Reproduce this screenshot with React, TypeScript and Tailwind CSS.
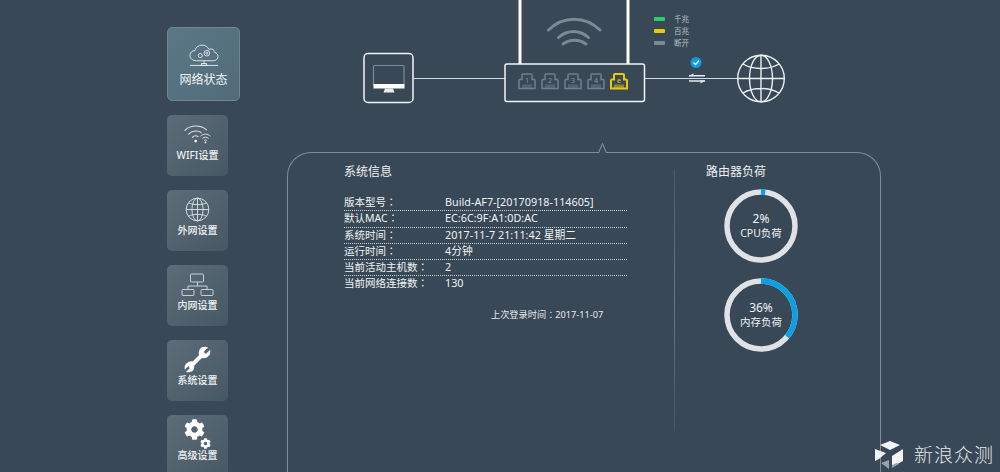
import { FaCog } from "react-icons/fa";

const FONT = "font-['Noto_Sans','Noto_Sans_CJK_SC',sans-serif]";

const INFO = [
  { label: "版本型号", value: "Build-AF7-[20170918-114605]" },
  { label: "默认MAC", value: "EC:6C:9F:A1:0D:AC" },
  { label: "系统时间", value: "2017-11-7 21:11:42 星期二" },
  { label: "运行时间", value: "4分钟" },
  { label: "当前活动主机数", value: "2" },
  { label: "当前网络连接数", value: "130" },
];

const LEGEND = [
  { label: "千兆", bar: "bg-[#2ecc68]" },
  { label: "百兆", bar: "bg-[#e6c907]" },
  { label: "断开", bar: "bg-[#7d8a94]" },
];

function CloudIcon() {
  return (
    <svg width="30" height="25" viewBox="0 0 32 26" fill="none" stroke="#e4e9ec" strokeWidth="1">
      <path d="M8 17.5C3.5 17.5 1 15 1 11.8 1 8.800 3.300 6.800 6.200 6.800 7.200 3 10.500.8 14 .8c3.300 0 6 1.800 7.200 4.700 1-.5 1.800-.6 2.800-.5 2.600.3 3 2.200 3.100 3.500 2.400.6 3.900 2.500 3.900 4.400 0 2.700-2.300 4.600-5 4.600Z" />
      <circle cx="12" cy="12" r="2.200" />
      <circle cx="19" cy="9.500" r="3" />
      <circle cx="19" cy="9.500" r="1" />
      <path d="M16 17.500v3M1 22.500h30M12 22.500h8" />
      <rect x="13.500" y="20.500" width="5" height="2" />
    </svg>
  );
}

function WifiIcon() {
  return (
    <svg width="28" height="19" viewBox="0 0 30 20" fill="none" stroke="#dfe4e8" strokeLinecap="round">
      <path d="M1 5.500C7 -0.500 18 -0.500 24 5" strokeWidth="1.200" />
      <path d="M5 9.500C9 5.500 15.500 5.500 18.500 8" strokeWidth="1.200" />
      <path d="M9 13c2-1.800 4.500-1.800 6-.8" strokeWidth="1.200" />
      <circle cx="12.500" cy="17" r="1.500" fill="#f1f3f5" stroke="none" />
      <path d="M18 11.500c3-2.600 7-2.600 10 0M20 14c2-1.600 4-1.600 6 0M21.800 16.300c1-.8 1.500-.8 2.400 0" strokeWidth="1" />
      <circle cx="23" cy="18.500" r="1" fill="#f1f3f5" stroke="none" />
    </svg>
  );
}

function SmallGlobeIcon() {
  return (
    <svg width="25" height="25" viewBox="0 0 26 26" fill="none" stroke="#d9dfe3" strokeWidth="1">
      <circle cx="13" cy="13" r="11.800" />
      <ellipse cx="13" cy="13" rx="5.800" ry="11.800" />
      <path d="M13 1.200v23.600M1.200 13h23.600M3.500 6c5 2.600 14 2.600 19 0M3.500 20c5-2.600 14-2.600 19 0" />
    </svg>
  );
}

function TreeIcon() {
  return (
    <svg width="33" height="23" viewBox="0 0 33 23" fill="none" stroke="#c9d0d5" strokeWidth="1">
      <rect x="9.500" y="1" width="13" height="8" rx="1" />
      <path d="M16.500 9v4M7 17v-4h19v4" />
      <rect x="1" y="16.500" width="12" height="6" rx="1" />
      <rect x="20" y="16.500" width="12" height="6" rx="1" />
    </svg>
  );
}

function WrenchIcon() {
  return (
    <svg width="27" height="27" viewBox="0 0 28 28" fill="#fff">
      <path d="M18 1.500C20.500.5 23.500.7 25 1.500L20.500 6l2 2.200L27 4c.8 2.200.3 5-2 7-2 1.800-4.500 2-6.500 1.500l-8 8c.5 2.500-.5 5-2.500 6-2 1-4.500 1-6 .5l4-4-1.500-2.200-3.700 3.700C.2 22 1 19 3 17.500c2-1.500 4-2 6-1.500l6.500-6.500C15 6.500 15.500 3 18 1.500Z" />
    </svg>
  );
}

function GearsIcon() {
  return (
    <div className="relative h-[31px] w-[27px]">
      <FaCog className="absolute left-0 top-0 text-[21px] text-white" />
      <FaCog className="absolute bottom-[1px] right-0 text-[11px] text-white" />
    </div>
  );
}

function MenuItem({ label, icon, active }: { label: string; icon: React.ReactNode; active?: boolean }) {
  if (active) {
    return (
      <div className="flex h-[74px] w-[73px] shrink-0 flex-col items-center rounded-[5px] border border-[#71878f] bg-gradient-to-br from-[#5b7785] to-[#516b7b] pt-[16px]">
        {icon}
        <span className="mt-[3px] text-[12px] leading-[16px] text-[#f2f5f6]">{label}</span>
      </div>
    );
  }
  return (
    <div className="flex h-[61px] w-[61px] shrink-0 flex-col items-center rounded-[5px] bg-gradient-to-br from-[#5c6d79] to-[#56677380] pt-[6px]">
      <div className="flex h-[26px] items-center">{icon}</div>
      <span className="mt-px whitespace-nowrap text-[10px] font-medium leading-[14px] text-[#eef1f3]">{label}</span>
    </div>
  );
}

function Port({ x, active, n }: { x: number; active?: boolean; n: string }) {
  const color = active ? "#e9cb0a" : "#6f7f8d";
  return (
    <g transform={`translate(${x} 73)`} fill="none" stroke={color} strokeWidth={active ? 2 : 1.500}>
      <path d="M1 15.500V7.500a1 1 0 0 1 1-1H4V2a1 1 0 0 1 1-1h8a1 1 0 0 1 1 1v4.500h2a1 1 0 0 1 1 1v8Z" />
      <path d="M5 15v-3.500M7 15v-3.500M9 15v-3.500M11 15v-3.500M13 15v-3.500" strokeWidth="1" />
      <text x="9" y="10" textAnchor="middle" fontSize="7" fill={active ? color : "#8997a3"} stroke="none" fontFamily="Noto Sans">
        {n}
      </text>
    </g>
  );
}

function Topology() {
  return (
    <svg width="713" height="152" viewBox="287 0 713 152" fill="none" className="block">
      {/* monitor */}
      <rect x="364" y="53.500" width="49" height="49" rx="4" stroke="#f2f4f5" strokeWidth="1.500" />
      <rect x="373.500" y="65.500" width="30.500" height="20" rx="1" stroke="#7d8a94" strokeWidth="1.200" />
      <rect x="373.500" y="84" width="31" height="4.500" fill="#fff" />
      <path d="M385 88.500h8l1.500 4h-11Z" fill="#e9ecee" />
      {/* links */}
      <path d="M413 78.500h92M645 78.500h92" stroke="#d5dade" strokeWidth="1" />
      {/* router */}
      <path d="M520 0v64M628 0v64" stroke="#fff" strokeWidth="3" />
      <rect x="505" y="64" width="139.500" height="37.500" rx="2" stroke="#f2f4f5" strokeWidth="1.500" fill="#384856" />
      <path d="M548.500 30C563 15.500 585 15.500 600 30M558.500 37.500c9-8 21-8 30 0M563 44c7-5 16-5 23 0" stroke="#7d8a94" strokeWidth="3" strokeLinecap="round" />
      <Port x={518} n="1" />
      <Port x={541} n="2" />
      <Port x={564} n="3" />
      <Port x={587} n="4" />
      <Port x={610} n="e" active />
      {/* status + arrows */}
      <circle cx="696" cy="62.500" r="5.500" fill="#0d9be2" />
      <path d="M693.500 62.500l2 2 3.500-3.800" stroke="#fff" strokeWidth="1.300" />
      <path d="M689 75.700h16M689 81h16" stroke="#e6e9eb" strokeWidth="1.500" />
      <path d="M688.500 76.200l5-3v3ZM705.500 80.500l-5 3v-3Z" fill="#e6e9eb" />
      {/* globe */}
      <g stroke="#eceff1" strokeWidth="1.400">
        <circle cx="761" cy="78.500" r="23.300" />
        <ellipse cx="761" cy="78.500" rx="11.500" ry="23.300" />
        <path d="M761 55.200v46.600M737.700 78.500h46.600M743 64c10 6 26 6 36 0M743 93c10-6 26-6 36 0" />
      </g>
    </svg>
  );
}

function Donut({ percent, value, label }: { percent: number; value: string; label: string }) {
  const r = 34;
  const c = 2 * Math.PI * r;
  return (
    <div className="relative h-[74px] w-[74px]">
      <svg width="74" height="74" viewBox="0 0 74 74" fill="none">
        <circle cx="37" cy="37" r={r} stroke="#dfe3e7" strokeWidth="5.500" />
        <circle
          cx="37"
          cy="37"
          r={r}
          stroke="#0b9fe3"
          strokeWidth="5.500"
          strokeDasharray={`${(percent / 100) * c} ${c}`}
          transform="rotate(-90 37 37)"
        />
      </svg>
      <div className="absolute inset-0 flex flex-col items-center justify-center pb-px text-[#edf0f3]">
        <span className="text-[12px] leading-[15px]">{value}</span>
        <span className="text-[10.500px] leading-[15px]">{label}</span>
      </div>
    </div>
  );
}

function Watermark() {
  return (
    <div className="absolute bottom-[3px] left-[875px] flex items-center gap-[11px]">
      <svg width="28" height="28" viewBox="0 0 28 28">
        <path d="M5 4L15 0l10 4-10 5Z" fill="#f3f4f5" />
        <path d="M0 8l11 4-7 6-4 2Z" fill="#f3f4f5" />
        <path d="M28 8v12l-11 6V15Z" fill="#f3f4f5" />
        <path d="M6 22l8-3v9ZM17 27l7-4-2-1-5 2Z" fill="#98a1a8" />
      </svg>
      <span className="text-[19px] font-light leading-[26px] tracking-[1px] text-[#e3e6e8]">新浪众测</span>
    </div>
  );
}

export default function App() {
  return (
    <div className={`${FONT} relative flex h-[472px] w-[1000px] overflow-hidden bg-[#384856]`}>
      <aside className="flex w-[287px] shrink-0 flex-col items-start gap-[14px] pl-[167px] pt-[27px]">
        <MenuItem active label="网络状态" icon={<CloudIcon />} />
        <MenuItem label="WIFI设置" icon={<WifiIcon />} />
        <MenuItem label="外网设置" icon={<SmallGlobeIcon />} />
        <MenuItem label="内网设置" icon={<TreeIcon />} />
        <MenuItem label="系统设置" icon={<WrenchIcon />} />
        <MenuItem label="高级设置" icon={<GearsIcon />} />
      </aside>

      <main className="relative flex-1">
        <Topology />

        <div className="absolute left-[367px] top-[14px] flex flex-col gap-[2px]">
          {LEGEND.map((item) => (
            <div key={item.label} className="flex h-[10px] items-center gap-[9px]">
              <span className={`h-[4.500px] w-[11px] rounded-[1px] ${item.bar}`} />
              <span className="text-[7.500px] leading-[10px] text-[#b9c1c7]">{item.label}</span>
            </div>
          ))}
        </div>

        <section className="relative flex h-[340px] w-[594px] rounded-t-[24px] border border-b-0 border-[#7e8c97] pl-[56px] pt-[10px]">
          <svg width="13" height="11" viewBox="0 0 13 11" className="absolute left-[308px] top-[-11px]">
            <path d="M0 11h2.500L6.500 1.500 10.500 11H13" fill="#384856" stroke="#8b98a2" strokeWidth="1" />
          </svg>

          <div className="w-[283px] shrink-0">
            <h2 className="text-[12px] font-normal leading-[18px] text-[#eef1f3]">系统信息</h2>
            <dl className="mt-[14px]">
              {INFO.map((row, i) => (
                <div
                  key={row.label}
                  className={`flex h-[16.300px] items-baseline overflow-hidden leading-[13px] text-[#f0f3f5] ${
                    i < INFO.length - 1 ? "border-b border-dotted border-[#cdd3d8]" : ""
                  }`}
                >
                  <dt className="w-[101px] shrink-0 whitespace-nowrap text-[10.500px]">
                    {row.label}
                    <span className="font-['Noto_Sans_CJK_TC',sans-serif]">：</span>
                  </dt>
                  <dd className="whitespace-nowrap text-[10.800px]">{row.value}</dd>
                </div>
              ))}
            </dl>
            <p className="mt-[14px] whitespace-nowrap pl-[147px] text-[9.200px] leading-[14px] text-[#e6eaed]">
              上次登录时间<span className="font-['Noto_Sans_CJK_TC',sans-serif]">：</span>2017-11-07
            </p>
          </div>

          <div className="ml-[47px] mt-[6px] h-[262px] w-px shrink-0 bg-gradient-to-b from-[#4a5c6a] via-[#667a87] to-[#465662]" />

          <div className="ml-[31px] flex flex-col">
            <h2 className="text-[12px] font-normal leading-[18px] text-[#eef1f3]">路由器负荷</h2>
            <div className="ml-[18px] mt-[8px] flex flex-col gap-[15px]">
              <Donut percent={2} value="2%" label="CPU负荷" />
              <Donut percent={36} value="36%" label="内存负荷" />
            </div>
          </div>
        </section>
      </main>

      <Watermark />
    </div>
  );
}
